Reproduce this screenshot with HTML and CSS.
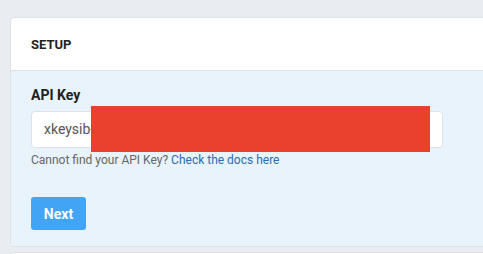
FILE: index.html
```html
<!DOCTYPE html>
<html lang="en">
<head>
    <meta charset="UTF-8">
    <meta name="viewport" content="width=device-width, initial-scale=1.0">
    <title>Setup</title>
    <link rel="stylesheet" href="styles.css">
</head>
<body class="background">
    <div class="page">
        <div class="card">
            <div class="card_header">SETUP</div>
            <div class="card_body">
                <label class="label">API Key</label>
                <div class="field">
                    <div class="input">xkeysib-</div>
                    <!--ключ скрыт-->
                    <div class="redact"></div>
                </div>
                <p class="help">Cannot find your API Key? <a class="link" href="#">Check the docs here</a></p>
                <button class="btn">Next</button>
            </div>
        </div>
        <div class="card next_card"></div>
    </div>
</body>
</html>
```

FILE: styles.css
```css
body {
    margin: 0;
    overflow: hidden;
}
.background {
    background: #e9edf2;
    font-family: Roboto, "Liberation Sans", sans-serif;
}
.page {
    padding: 17px 0 0 10px;
    width: 520px;
}
.card {
    background: #fff;
    border: 1px solid #dde2e8;
    border-radius: 4px;
    overflow: hidden;
}
.card_header {
    height: 53px;
    box-sizing: border-box;
    padding: 19px 20px 0 20px;
    font-size: 13px;
    font-weight: bold;
    color: #222;
    border-bottom: 1px solid #dde2e8;
}
.card_body {
    background: #e8f3fc;
    padding: 16px 20px 15px 20px;
    height: 144px;
}
.label {
    display: block;
    font-size: 14px;
    font-weight: bold;
    color: #222;
    height: 24px;
}
.field {
    position: relative;
    width: 412px;
}
.input {
    height: 37px;
    box-sizing: border-box;
    background: #fff;
    border: 1px solid #dfe3e8;
    border-radius: 4px;
    padding: 9px 12px;
    font-size: 14px;
    color: #555;
}
.redact {
    position: absolute;
    left: 60px;
    top: -5px;
    width: 339px;
    height: 46px;
    background: #e9412d;
}
.help {
    margin: 5px 0 0 0;
    font-size: 12px;
    color: #666;
}
.link {
    color: #2a6db0;
    text-decoration: none;
}
.btn {
    margin-top: 30px;
    width: 55px;
    height: 33px;
    background: #42a4f4;
    border: none;
    border-radius: 3px;
    color: #fff;
    font-family: Roboto, "Liberation Sans", sans-serif;
    font-size: 14px;
    font-weight: bold;
}
.next_card {
    margin-top: 5px;
    height: 20px;
}
```
